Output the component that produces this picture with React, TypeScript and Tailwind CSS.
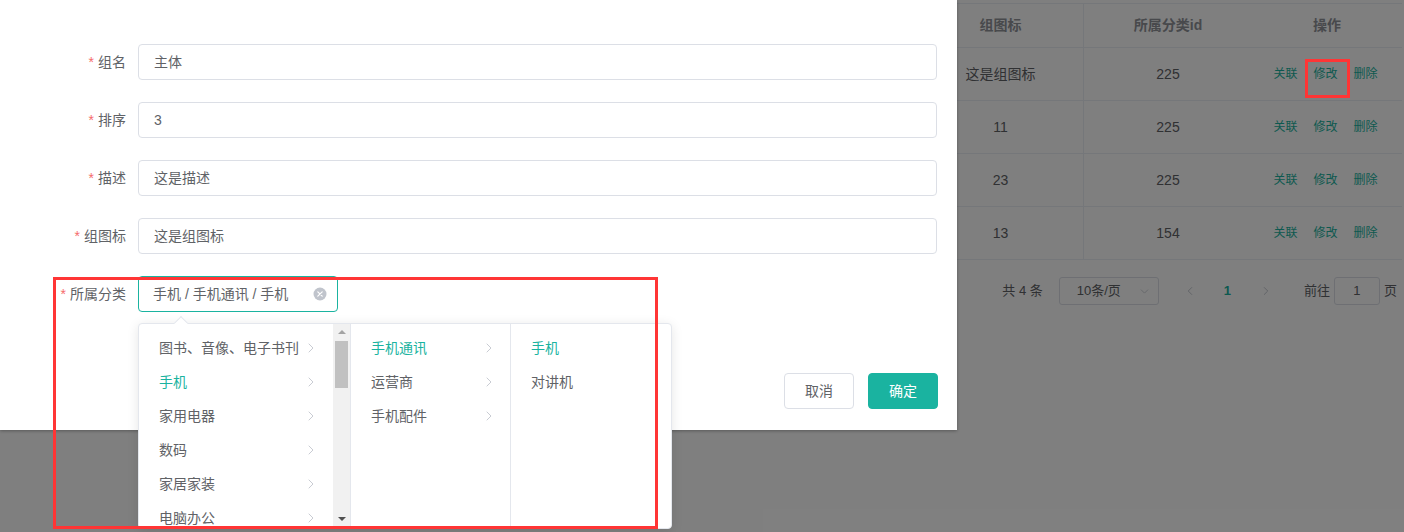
import { ChevronDown, ChevronLeft, ChevronRight } from "lucide-react";

const fields = [
  { label: "组名", value: "主体" },
  { label: "排序", value: "3" },
  { label: "描述", value: "这是描述" },
  { label: "组图标", value: "这是组图标" },
];

const rows = [
  { icon: "这是组图标", catId: "225" },
  { icon: "11", catId: "225" },
  { icon: "23", catId: "225" },
  { icon: "13", catId: "154" },
];

const level1 = ["图书、音像、电子书刊", "手机", "家用电器", "数码", "家居家装", "电脑办公"];
const level2 = ["手机通讯", "运营商", "手机配件"];
const level3 = ["手机", "对讲机"];

function Arrow() {
  return <ChevronRight className="h-[16px] w-[16px] text-[#c0c4cc]" strokeWidth={1.3} />;
}

function ClearIcon() {
  return (
    <svg width="14" height="14" viewBox="0 0 14 14">
      <circle cx="7" cy="7" r="6.5" fill="#c0c4cc" />
      <path d="M4.8 4.8 9.2 9.2M9.2 4.8 4.8 9.2" stroke="#fff" strokeWidth="1.2" strokeLinecap="round" />
    </svg>
  );
}

function BackgroundPage() {
  return (
    <div className="flex h-full w-full flex-col items-end bg-white pr-[2px] pt-[3px]">
      {/* table */}
      <div className="w-[484px] border-t border-[#ebeef5] text-[14px] text-[#606266]">
        <div className="flex h-[44px] border-b border-[#ebeef5] font-bold text-[#909399]">
          <div className="flex w-[166px] items-center justify-center border-r border-[#ebeef5]">组图标</div>
          <div className="flex w-[168px] items-center justify-center">所属分类id</div>
          <div className="flex flex-1 items-center justify-center">操作</div>
        </div>
        {rows.map((r, i) => (
          <div key={i} className="flex h-[53px] border-b border-[#ebeef5]">
            <div className="flex w-[166px] items-center justify-center border-r border-[#ebeef5]">{r.icon}</div>
            <div className="flex w-[168px] items-center justify-center">{r.catId}</div>
            <div className="flex flex-1 items-center justify-center gap-[16px] pr-[3px] text-[12px] text-[#1ab3a0]">
              <span>关联</span>
              <span>修改</span>
              <span>删除</span>
            </div>
          </div>
        ))}
      </div>

      {/* pagination */}
      <div className="mt-[17px] flex h-[28px] items-center pr-[5px] text-[13px] text-[#606266]">
        <span className="mr-[16px]">共 4 条</span>
        <div className="flex h-[28px] w-[100px] items-center justify-between rounded-[3px] border border-[#dcdfe6] pl-[17px] pr-[7px]">
          <span>10条/页</span>
          <ChevronDown className="h-[13px] w-[13px] text-[#c0c4cc]" strokeWidth={1.4} />
        </div>
        <ChevronLeft className="ml-[24px] h-[14px] w-[14px] text-[#c0c4cc]" strokeWidth={1.6} />
        <span className="ml-[27px] font-bold text-[#1ab3a0]">1</span>
        <ChevronRight className="ml-[28px] h-[14px] w-[14px] text-[#c0c4cc]" strokeWidth={1.6} />
        <span className="ml-[31px]">前往</span>
        <div className="ml-[4px] flex h-[28px] w-[46px] items-center justify-center rounded-[3px] border border-[#dcdfe6]">1</div>
        <span className="ml-[4px]">页</span>
      </div>
    </div>
  );
}

function Dialog() {
  return (
    <div className="absolute left-0 top-0 h-[430px] w-[957px] bg-white pt-[44px] shadow-[0_1px_3px_rgba(0,0,0,0.3)]">
      {fields.map((f) => (
        <div key={f.label} className="mb-[22px] flex h-[36px] items-center">
          <label className="w-[138px] pr-[12px] text-right text-[14px] text-[#606266]">
            <span className="mr-[4px] text-[#f56c6c]">*</span>
            {f.label}
          </label>
          <div className="mr-[20px] flex h-[36px] flex-1 items-center rounded-[4px] border border-[#dcdfe6] px-[15px] text-[14px] text-[#606266]">
            {f.value}
          </div>
        </div>
      ))}
      <div className="flex h-[36px] items-center">
        <label className="w-[138px] pr-[12px] text-right text-[14px] text-[#606266]">
          <span className="mr-[4px] text-[#f56c6c]">*</span>
          所属分类
        </label>
        <div className="flex h-[36px] w-[200px] items-center justify-between rounded-[4px] border border-[#1ab3a0] pl-[14px] pr-[10px] text-[14px] text-[#606266]">
          <span>手机 / 手机通讯 / 手机</span>
          <ClearIcon />
        </div>
      </div>
      <div className="mt-[61px] flex justify-end gap-[14px] pr-[19px]">
        <button className="h-[36px] w-[70px] rounded-[4px] border border-[#dcdfe6] bg-white text-[14px] text-[#606266]">取消</button>
        <button className="h-[36px] w-[70px] rounded-[4px] border border-[#1ab3a0] bg-[#1ab3a0] text-[14px] text-white">确定</button>
      </div>
    </div>
  );
}

function CascaderPanel() {
  return (
    <div className="absolute left-[138px] top-[323px] flex h-[206px] w-[534px] rounded-[4px] border border-[#e4e7ed] bg-white text-[14px] text-[#606266] shadow-[0_2px_12px_0_rgba(0,0,0,0.1)]">
      {/* popper arrow */}
      <div className="absolute left-[37px] top-[-6px] h-[10px] w-[10px] rotate-45 border-l border-t border-[#e4e7ed] bg-white" />

      {/* level 1 with native scrollbar */}
      <div className="flex w-[212px] border-r border-[#e4e7ed]">
        <div className="flex-1 overflow-hidden pt-[7px]">
          {level1.map((t) => (
            <div
              key={t}
              className={`flex h-[34px] items-center justify-between pl-[20px] pr-[14px] ${t === "手机" ? "text-[#1ab3a0]" : ""}`}
            >
              <span>{t}</span>
              <Arrow />
            </div>
          ))}
        </div>
        <div className="flex w-[17px] flex-col items-center bg-[#f1f1f1]">
          <div className="mt-[6px] h-0 w-0 border-x-[4px] border-b-[4px] border-x-transparent border-b-[#a3a3a3]" />
          <div className="mt-[7px] h-[47px] w-[13px] bg-[#c1c1c1]" />
          <div className="flex-1" />
          <div className="mb-[7px] h-0 w-0 border-x-[4px] border-t-[4px] border-x-transparent border-t-[#505050]" />
        </div>
      </div>

      {/* level 2 */}
      <div className="w-[160px] border-r border-[#e4e7ed] pt-[7px]">
        {level2.map((t) => (
          <div
            key={t}
            className={`flex h-[34px] items-center justify-between pl-[20px] pr-[13px] ${t === "手机通讯" ? "text-[#1ab3a0]" : ""}`}
          >
            <span>{t}</span>
            <Arrow />
          </div>
        ))}
      </div>

      {/* level 3 */}
      <div className="flex-1 pt-[7px]">
        {level3.map((t) => (
          <div key={t} className={`flex h-[34px] items-center pl-[20px] ${t === "手机" ? "text-[#1ab3a0]" : ""}`}>
            {t}
          </div>
        ))}
      </div>
    </div>
  );
}

export default function App() {
  return (
    <div className="relative h-[532px] w-[1404px] overflow-hidden font-['Liberation_Sans','Noto_Sans_CJK_SC',sans-serif]">
      <BackgroundPage />
      <div className="absolute inset-0 bg-black/50" />
      <Dialog />
      <CascaderPanel />
      {/* annotation boxes */}
      <div className="absolute left-[53px] top-[277px] h-[252px] w-[605px] border-[3px] border-[#ff3535]" />
      <div className="absolute left-[1305px] top-[59px] h-[39px] w-[45px] border-[3px] border-[#ff3535]" />
    </div>
  );
}
